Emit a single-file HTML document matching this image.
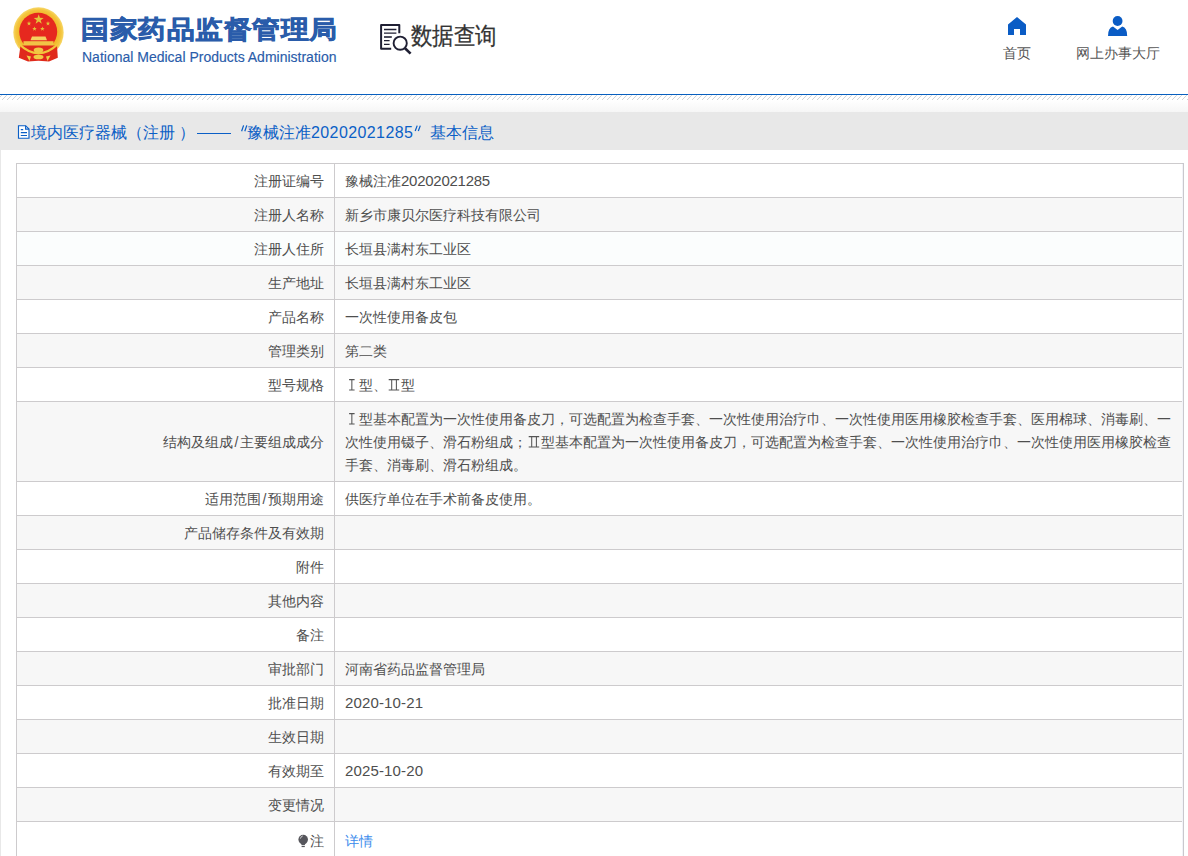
<!DOCTYPE html>
<html><head><meta charset="utf-8">
<style>
*{margin:0;padding:0;box-sizing:border-box}
html,body{width:1188px;height:856px;overflow:hidden;background:#fff;font-family:"Liberation Sans",sans-serif;}
.hdr{position:absolute;left:0;top:0;width:1188px;height:94px;background:#fff}
.emblem{position:absolute;left:12px;top:6px;width:53px;height:58px}
.t-cn{position:absolute;left:81px;top:11px;font-size:28px;font-weight:900;color:#2a5caa;white-space:nowrap;letter-spacing:0px;line-height:36px;letter-spacing:0.5px;transform:scaleY(0.9);transform-origin:0 31px;-webkit-text-stroke:0.7px #2a5caa}
.t-en{position:absolute;left:82px;top:48px;font-size:14px;color:#2a5caa;-webkit-text-stroke:0.15px #2a5caa;white-space:nowrap;line-height:18px}
.sq-icon{position:absolute;left:378px;top:22px;width:36px;height:36px}
.sq-txt{position:absolute;left:411px;top:20px;font-size:22px;color:#333;-webkit-text-stroke:0.25px #333;line-height:30px;white-space:nowrap;transform:scale(0.976,1.09);transform-origin:0 0}
.nav{position:absolute;top:0;text-align:center;font-size:14px;color:#555;white-space:nowrap}
.nav svg{position:absolute}
.nav span{position:absolute;top:44px;line-height:18px}
.line{position:absolute;left:0;top:94px;width:1188px;height:1px;background:#0960bf}
.hatch{position:absolute;left:0;top:95px;width:1188px;height:5px;
 background:repeating-linear-gradient(135deg,#fff 0,#fff 2.5px,#d6d6d6 2.5px,#d6d6d6 3.5px,#fff 3.5px,#fff 5px)}
.grad{position:absolute;left:0;top:100px;width:1188px;height:12px;background:linear-gradient(#fff,#f6f6f6)}
.band{position:absolute;left:0;top:112px;width:1188px;height:38px;background:#e8e8e8}
.band .ttl{position:absolute;top:10px;font-size:16px;color:#0b5fc6;line-height:22px;white-space:nowrap}
.lstrip{position:absolute;left:0;top:150px;width:1px;height:706px;background:#e8e8e8}
table{position:absolute;left:16px;top:163px;width:1167px;border-collapse:collapse;font-size:14px;color:#4e4e4e}
td{border:1px solid #cdcbcd;line-height:23px;padding:6px 10px 4px;vertical-align:middle}
td.k{text-align:right;width:318px}
td+td{border-right:none}
.rb{position:absolute;left:1182px;top:163px;width:1px;height:693px;background:#f2f3f8;border-right:1px solid #c9c8cd;box-sizing:content-box}
tr:nth-child(even) td{background:#f7f7f7}
tr:nth-child(odd) td{background:#fff}
tr:nth-child(3) td{background:#fbfdfd}
tr.last td{padding-top:8px;border-bottom:none}
.sl{padding:0 1.5px}
.dg{font-size:15px;letter-spacing:-0.26px;line-height:0}
.dt{font-size:15px;letter-spacing:0.15px;line-height:0}
.rn{display:inline-block;vertical-align:-1px}
a{color:#3c8cec;text-decoration:none}
</style></head><body>
<div class="hdr">
  <svg style="position:absolute;left:0;top:0" width="70" height="70" viewBox="0 0 70 70">
<defs><radialGradient id="gr" cx="50%" cy="50%" r="50%"><stop offset="0.72" stop-color="#f0b526"/><stop offset="0.9" stop-color="#f4c53e"/><stop offset="1" stop-color="#f7d86a"/></radialGradient></defs>
<circle cx="38.5" cy="32.5" r="25.2" fill="url(#gr)"/>
<circle cx="38.2" cy="31.8" r="19" fill="#e6281f"/>
<polygon points="38.70,14.30 39.92,17.82 43.65,17.89 40.68,20.14 41.76,23.71 38.70,21.58 35.64,23.71 36.72,20.14 33.75,17.89 37.48,17.82" fill="#e3c53a"/>
<polygon points="29.00,21.10 29.56,22.72 31.28,22.76 29.91,23.80 30.41,25.44 29.00,24.46 27.59,25.44 28.09,23.80 26.72,22.76 28.44,22.72" fill="#e3c53a"/>
<polygon points="48.00,21.10 48.56,22.72 50.28,22.76 48.91,23.80 49.41,25.44 48.00,24.46 46.59,25.44 47.09,23.80 45.72,22.76 47.44,22.72" fill="#e3c53a"/>
<polygon points="34.50,26.40 35.06,28.02 36.78,28.06 35.41,29.10 35.91,30.74 34.50,29.76 33.09,30.74 33.59,29.10 32.22,28.06 33.94,28.02" fill="#e3c53a"/>
<polygon points="42.40,26.40 42.96,28.02 44.68,28.06 43.31,29.10 43.81,30.74 42.40,29.76 40.99,30.74 41.49,29.10 40.12,28.06 41.84,28.02" fill="#e3c53a"/>
<path d="M32 36.5 L45.5 36.5 L47 40.2 L30.5 40.2 Z" fill="#f4d060"/>
<rect x="23.5" y="41.2" width="30" height="4.8" fill="#f1c446"/>
<path d="M20.5 45.5 L18.8 57.8 L28 61.6 L38.5 60.8 L49 61.6 L57.8 57.8 L57 45.5 Z" fill="#e02a1c"/>
<path d="M18.5 43.5 Q38.5 63 58.5 43.5" fill="none" stroke="#f2c63c" stroke-width="2.3"/>
<ellipse cx="38.5" cy="50" rx="4.8" ry="2.6" fill="#f1c845"/>
<ellipse cx="38.5" cy="57" rx="5" ry="2.3" fill="#f1cc45"/>
<path d="M26.5 55.5 L31 56.5 L29.5 61 Z M50.5 55.5 L46 56.5 L47.5 61 Z" fill="#efd048"/>
</svg>
  <div class="t-cn">国家药品监督管理局</div>
  <div class="t-en">National Medical Products Administration</div>
  <svg class="sq-icon" viewBox="378 22 36 36">
    <path d="M399.3 33.2 V25 H381.1 V48.7 H391.2" fill="none" stroke="#1f1f33" stroke-width="2" stroke-linejoin="round"/>
    <path d="M384 29.5 H396.4 M384 33.2 H396.4 M384 40.6 H389.6 M384 44.4 H389.6" stroke="#1f1f33" stroke-width="1.3"/>
    <path d="M384 37 H391.8" stroke="#1f1f33" stroke-width="1.6"/>
    <circle cx="400.2" cy="43.2" r="6.6" fill="none" stroke="#1f1f33" stroke-width="1.9"/>
    <path d="M405 48.2 L410.6 53.6" stroke="#1f1f33" stroke-width="2.6"/>
  </svg>
  <div class="sq-txt">数据查询</div>
  <div class="nav" style="left:990px;width:54px">
    <svg style="left:0;top:0" width="54" height="40" viewBox="990 0 54 40"><path d="M1017 17 L1026 24.5 V35 H1020 V29 H1014 V35 H1008 V24.5 Z" fill="#0a5cc5"/></svg>
    <span style="left:13px">首页</span>
  </div>
  <div class="nav" style="left:1070px;width:100px">
    <svg style="left:0;top:0" width="100" height="40" viewBox="1070 0 100 40"><circle cx="1117.6" cy="21" r="4.9" fill="#0a5cc5"/><path d="M1108 36 Q1108 27.5 1113 26.5 L1117.6 30 L1122.2 26.5 Q1127.2 27.5 1127.2 36 Z" fill="#0a5cc5"/></svg>
    <span style="left:6px">网上办事大厅</span>
  </div>
</div>
<div class="line"></div>
<svg style="position:absolute;left:0;top:95px" width="1188" height="5" shape-rendering="crispEdges"><defs><pattern id="ht" width="5" height="5" patternUnits="userSpaceOnUse"><rect x="1" y="0" width="1" height="1" fill="#dadada"/><rect x="0" y="1" width="1" height="1" fill="#d2d2d2"/><rect x="4" y="2" width="1" height="1" fill="#d2d2d2"/><rect x="3" y="3" width="1" height="1" fill="#d2d2d2"/><rect x="2" y="4" width="1" height="1" fill="#d2d2d2"/></pattern></defs><rect width="1188" height="5" fill="url(#ht)"/></svg>
<div class="grad"></div>
<div class="band">
<svg style="position:absolute;left:0;top:0" width="40" height="38" viewBox="0 112 40 38"><path d="M18.5 125.7 H25.6 L29 129.1 V138.2 H18.5 Z" fill="#fff" stroke="#0b5fc6" stroke-width="1.15"/><path d="M25.6 125.7 V129.1 H29" fill="none" stroke="#0b5fc6" stroke-width="1.1"/><path d="M20.8 129.6 H23.2 M20.8 132.6 H27 M20.8 135.5 H27" stroke="#0b5fc6" stroke-width="1.1"/></svg>
<div class="ttl" style="left:31px">境内医疗器械（注册</div><div class="ttl" style="left:179px">）</div>
<div style="position:absolute;left:197px;top:20.5px;width:34px;height:1.2px;background:#0b5fc6"></div>
<svg style="position:absolute;left:0;top:0" width="430" height="38" viewBox="0 112 430 38"><path d="M241.6 131.2 L243.6 125.4 M244.8 131.2 L246.8 125.4 M415.2 131 L417.2 125.6 M418.3 131 L420.3 125.6" stroke="#0b5fc6" stroke-width="1.25" fill="none"/></svg>
<div class="ttl" style="left:247px">豫械注准<span style="letter-spacing:0.4px">20202021285</span></div>

<div class="ttl" style="left:430px">基本信息</div>
</div>
<div class="lstrip"></div>
<table>
<tr><td class="k">注册证编号</td><td>豫械注准<span class="dg">20202021285</span></td></tr>
<tr><td class="k">注册人名称</td><td>新乡市康贝尔医疗科技有限公司</td></tr>
<tr><td class="k">注册人住所</td><td>长垣县满村东工业区</td></tr>
<tr><td class="k">生产地址</td><td>长垣县满村东工业区</td></tr>
<tr><td class="k">产品名称</td><td>一次性使用备皮包</td></tr>
<tr><td class="k">管理类别</td><td>第二类</td></tr>
<tr><td class="k">型号规格</td><td><svg class="rn" width="14" height="12" viewBox="0 0 14 12"><path d="M4.1 0.6 H9.6 M4.1 10.9 H9.6 M6.85 0.6 V10.9" stroke="#555" stroke-width="1.05" fill="none"/></svg>型、<svg class="rn" width="14" height="12" viewBox="0 0 14 12"><path d="M1.7 0.6 H12.2 M1.7 10.9 H12.2 M4.7 0.6 V10.9 M9.4 0.6 V10.9" stroke="#555" stroke-width="1.05" fill="none"/></svg>型</td></tr>
<tr><td class="k">结构及组成<span class="sl">/</span>主要组成成分</td><td><svg class="rn" width="14" height="12" viewBox="0 0 14 12"><path d="M4.1 0.6 H9.6 M4.1 10.9 H9.6 M6.85 0.6 V10.9" stroke="#555" stroke-width="1.05" fill="none"/></svg>型基本配置为一次性使用备皮刀，可选配置为检查手套、一次性使用治疗巾、一次性使用医用橡胶检查手套、医用棉球、消毒刷、一次性使用镊子、滑石粉组成；<svg class="rn" width="14" height="12" viewBox="0 0 14 12"><path d="M1.7 0.6 H12.2 M1.7 10.9 H12.2 M4.7 0.6 V10.9 M9.4 0.6 V10.9" stroke="#555" stroke-width="1.05" fill="none"/></svg>型基本配置为一次性使用备皮刀，可选配置为检查手套、一次性使用治疗巾、一次性使用医用橡胶检查手套、消毒刷、滑石粉组成。</td></tr>
<tr><td class="k">适用范围<span class="sl">/</span>预期用途</td><td>供医疗单位在手术前备皮使用。</td></tr>
<tr><td class="k">产品储存条件及有效期</td><td></td></tr>
<tr><td class="k">附件</td><td></td></tr>
<tr><td class="k">其他内容</td><td></td></tr>
<tr><td class="k">备注</td><td></td></tr>
<tr><td class="k">审批部门</td><td>河南省药品监督管理局</td></tr>
<tr><td class="k">批准日期</td><td><span class="dt">2020-10-21</span></td></tr>
<tr><td class="k">生效日期</td><td></td></tr>
<tr><td class="k">有效期至</td><td><span class="dt">2025-10-20</span></td></tr>
<tr><td class="k">变更情况</td><td></td></tr>
<tr class="last"><td class="k"><svg width="11" height="14" viewBox="0 0 11 14" style="vertical-align:-2px;margin-right:1px"><circle cx="5.2" cy="5.6" r="4.8" fill="#56565c"/><path d="M2.6 8.5 L3.6 11 H6.8 L7.8 8.5 Z" fill="#56565c"/><rect x="3.6" y="11.8" width="3.2" height="1.3" fill="#56565c"/><path d="M2.4 4.6 Q2.8 2.4 4.8 1.9" stroke="#fff" stroke-width="0.9" fill="none" opacity="0.8"/></svg>注</td><td><a>详情</a></td></tr>
</table>
<div class="rb"></div><div style="position:absolute;left:1182px;top:163px;width:2px;height:1px;background:#c9c8cd"></div>
</body></html>
